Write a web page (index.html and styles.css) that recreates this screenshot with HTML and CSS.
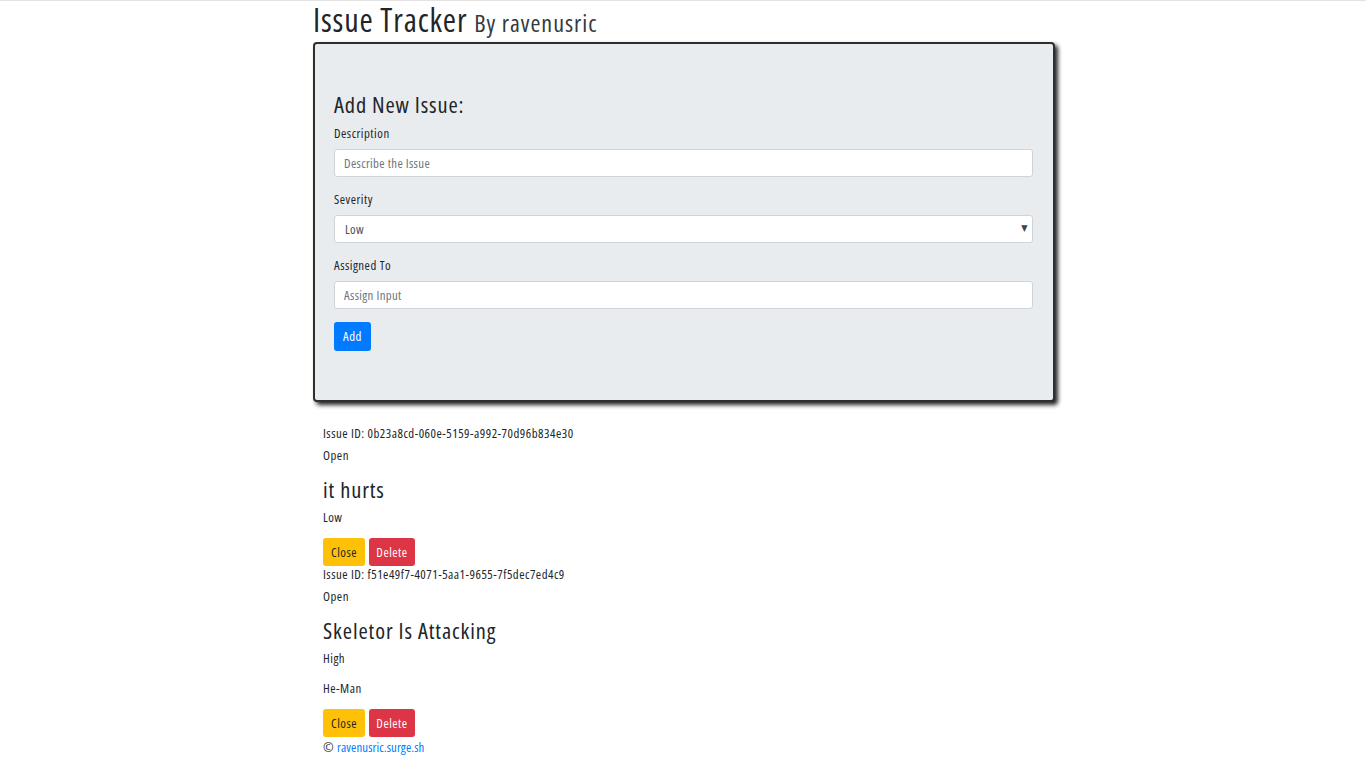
FILE: index.html
```html
<!DOCTYPE html>
<html lang="en">
<head>
<meta charset="utf-8">
<title>Issue Tracker</title>
<link rel="stylesheet" href="styles.css">
</head>
<body>
<div class="container">
  <h1 class="title">Issue Tracker <small class="byline">By ravenusric</small></h1>
  <div class="card">
    <h2 class="card-heading">Add New Issue:</h2>
    <form class="issue-form">
      <div class="group">
        <label class="label">Description</label>
        <input class="field" type="text" placeholder="Describe the Issue">
      </div>
      <div class="group">
        <label class="label">Severity</label>
        <div class="select-wrap">
          <select class="field select">
            <option>Low</option>
            <option>Medium</option>
            <option>High</option>
          </select>
        </div>
      </div>
      <div class="group last">
        <label class="label">Assigned To</label>
        <input class="field" type="text" placeholder="Assign Input">
      </div>
      <button type="button" class="btn btn-primary">Add</button>
    </form>
  </div>

  <div class="issues">
    <div class="issue">
      <p class="issue-id">Issue ID: 0b23a8cd-060e-5159-a992-70d96b834e30</p>
      <p class="status">Open</p>
      <h3 class="issue-title">it hurts</h3>
      <p class="meta">Low</p>
      <div class="actions">
        <button type="button" class="btn btn-warning">Close</button>
        <button type="button" class="btn btn-danger">Delete</button>
      </div>
    </div>
    <div class="issue">
      <p class="issue-id">Issue ID: f51e49f7-4071-5aa1-9655-7f5dec7ed4c9</p>
      <p class="status">Open</p>
      <h3 class="issue-title">Skeletor Is Attacking</h3>
      <p class="meta">High</p>
      <p class="meta">He-Man</p>
      <div class="actions">
        <button type="button" class="btn btn-warning">Close</button>
        <button type="button" class="btn btn-danger">Delete</button>
      </div>
    </div>
    <p class="footer">© <a class="footer-link" href="#">ravenusric.surge.sh</a></p>
  </div>
</div>
</body>
</html>
```

FILE: styles.css
```css
html, body {
  margin: 0;
  padding: 0;
  background: #fff;
}
body {
  padding-left: 2px;
  border-top: 1px solid #e3e3e3;
  font-family: "Open Sans", "DejaVu Sans Condensed", sans-serif;
  font-stretch: 87.5%;
  font-size: 12.8px;
  letter-spacing: 0.5px;
  color: #212529;
}
.container {
  width: 742px;
  margin: 0 auto;
}
.title {
  margin: 0;
  font-size: 32px;
  line-height: 38px;
  font-weight: normal;
  letter-spacing: 0.85px;
  color: #212529;
}
.byline {
  font-size: 24px;
  line-height: 1;
  letter-spacing: 1px;
  color: #343a40;
}
.card {
  margin-top: 3px;
  background: #e9ecef;
  border: 2px solid #2e2e2e;
  border-radius: 4px;
  box-shadow: 3px 3px 4px rgba(0, 0, 0, 0.85);
  padding: 48px 20px 49px 19px;
}
.card-heading {
  margin: 0 0 7px;
  font-size: 22.4px;
  line-height: 26px;
  font-weight: normal;
  letter-spacing: 0.87px;
}
.group {
  display: flex;
  flex-direction: column;
  margin-bottom: 14px;
}
.group.last {
  margin-bottom: 13px;
}
.label {
  font-size: 12.8px;
  line-height: 16px;
  margin-bottom: 8px;
}
.field {
  box-sizing: border-box;
  height: 28px;
  width: 100%;
  border: 1px solid #ced4da;
  border-radius: 3px;
  background: #fff;
  padding: 0 9px;
  font-family: inherit;
  font-stretch: inherit;
  letter-spacing: 0.35px;
  font-size: 12.8px;
  color: #495057;
  outline: none;
}
.field::placeholder {
  color: #6c757d;
}
.select-wrap {
  position: relative;
}
.select {
  -webkit-appearance: none;
  appearance: none;
  padding-left: 10px;
}
.select-wrap::after {
  content: "▼";
  position: absolute;
  right: 5px;
  top: 8px;
  font-size: 9px;
  line-height: 10px;
  color: #3d4349;
  pointer-events: none;
}
.btn {
  box-sizing: border-box;
  height: 29px;
  border: 0;
  border-radius: 3px;
  padding: 0 8px;
  font-family: inherit;
  font-stretch: inherit;
  letter-spacing: inherit;
  font-size: 12.8px;
  line-height: 29px;
  cursor: pointer;
}
.btn-primary {
  background: #007bff;
  color: #fff;
  width: 37px;
  padding: 0;
}
.btn-warning {
  background: #ffc107;
  color: #212529;
  height: 28px;
  line-height: 28px;
  width: 42px;
  padding: 0;
}
.btn-danger {
  background: #dc3545;
  color: #fff;
  height: 28px;
  line-height: 28px;
  width: 46px;
  padding: 0;
}
.issues {
  padding: 23px 10px 0;
}
.issue-id {
  margin: 0 0 6px;
  line-height: 16px;
}
.status {
  margin: 0;
  line-height: 16px;
}
.issue-title {
  margin: 11px 0 3px;
  font-size: 22.4px;
  line-height: 32px;
  font-weight: normal;
  letter-spacing: 0.9px;
}
.meta {
  margin: 0 0 14px;
  line-height: 16px;
}
.actions {
  display: flex;
  gap: 4px;
  margin-top: -1px;
}
.footer {
  margin: 2px 0 0;
  line-height: 16px;
}
.footer-link {
  color: #007bff;
  text-decoration: none;
  letter-spacing: 0.1px;
}
```
